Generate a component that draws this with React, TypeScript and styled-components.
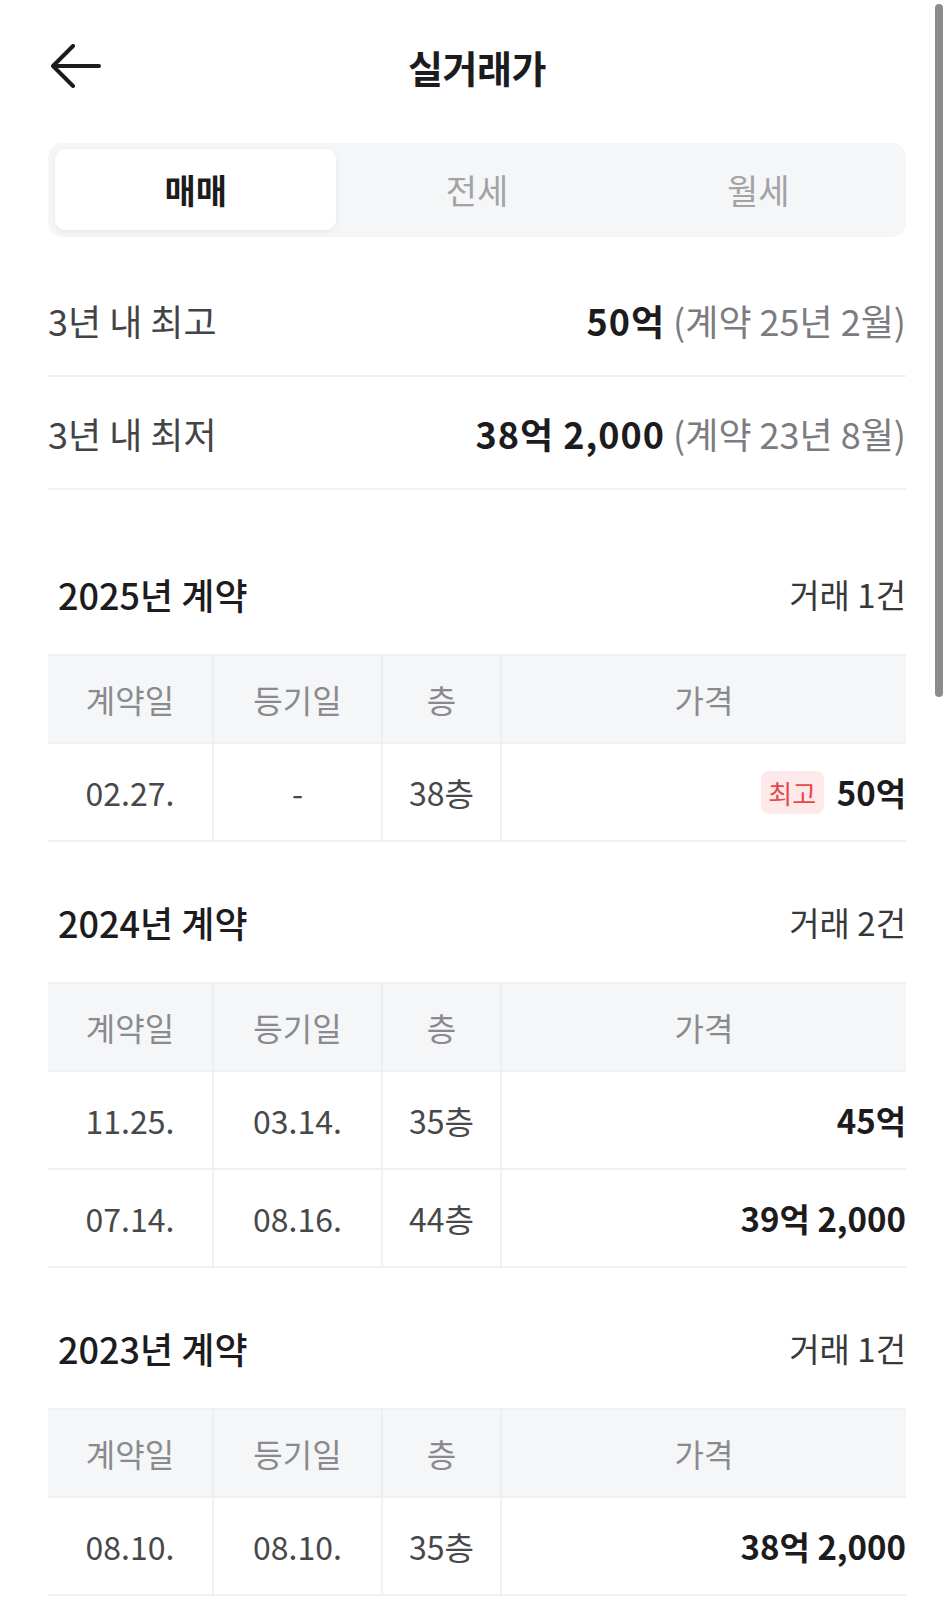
import styled, { createGlobalStyle } from "styled-components"

type Deal = {
  date: string
  registered: string
  floor: string
  price: string
  highest?: boolean
}

type YearGroup = {
  year: number
  deals: Deal[]
}

const groups: YearGroup[] = [
  { year: 2025, deals: [{ date: '02.27.', registered: '-', floor: '38층', price: '50억', highest: true }] },
  {
    year: 2024,
    deals: [
      { date: '11.25.', registered: '03.14.', floor: '35층', price: '45억' },
      { date: '07.14.', registered: '08.16.', floor: '44층', price: '39억 2,000' },
    ],
  },
  { year: 2023, deals: [{ date: '08.10.', registered: '08.10.', floor: '35층', price: '38억 2,000' }] },
]

const tabs = ['매매', '전세', '월세']

export default function App() {
  return (
    <>
      <GlobalStyle />
      <Page>
        <Header>
          <BackButton aria-label="뒤로">
            <svg width="50" height="44" viewBox="0 0 50 44" fill="none">
              <path d="M22 2 L2 22 L22 42 M2 22 H48" stroke="#1c1c1e" strokeWidth="4" strokeLinecap="round" strokeLinejoin="round" />
            </svg>
          </BackButton>
          <Title>실거래가</Title>
          <span />
        </Header>

        <Tabs>
          {tabs.map((tab, index) => (
            <Tab key={tab} $active={index === 0}>{tab}</Tab>
          ))}
        </Tabs>

        <Summary>
          <SummaryRow>
            <SummaryLabel>3년 내 최고</SummaryLabel>
            <SummaryValue>
              <strong>50억</strong> <Muted>(계약 25년 2월)</Muted>
            </SummaryValue>
          </SummaryRow>
          <SummaryRow>
            <SummaryLabel>3년 내 최저</SummaryLabel>
            <SummaryValue>
              <strong>38억 2,000</strong> <Muted>(계약 23년 8월)</Muted>
            </SummaryValue>
          </SummaryRow>
        </Summary>

        {groups.map((group) => (
          <Section key={group.year}>
            <SectionHeader>
              <SectionTitle>{group.year}년 계약</SectionTitle>
              <DealCount>거래 {group.deals.length}건</DealCount>
            </SectionHeader>
            <Table>
              <HeadCell>계약일</HeadCell>
              <HeadCell>등기일</HeadCell>
              <HeadCell>층</HeadCell>
              <HeadCell $last>가격</HeadCell>
              {group.deals.map((deal) => (
                <Row key={deal.date}>
                  <Cell>{deal.date}</Cell>
                  <Cell>{deal.registered}</Cell>
                  <Cell>{deal.floor}</Cell>
                  <PriceCell>
                    {deal.highest && <Badge>최고</Badge>}
                    {deal.price}
                  </PriceCell>
                </Row>
              ))}
            </Table>
          </Section>
        ))}
      </Page>
      <ScrollThumb />
    </>
  )
}

const GlobalStyle = createGlobalStyle`
  * {
    box-sizing: border-box;
  }

  body {
    margin: 0;
    background: #fff;
    overflow: hidden;
    font-family: "Noto Sans CJK KR", "Noto Sans", sans-serif;
    color: #1c1c1e;
  }
`

const Page = styled.div`
  padding: 0 38px 18px 48px;
`

const Header = styled.header`
  display: grid;
  grid-template-columns: 1fr auto 1fr;
  align-items: center;
  height: 132px;
`

const BackButton = styled.button`
  display: flex;
  align-items: center;
  justify-self: start;
  margin-left: 3px;
  padding: 0;
  border: none;
  background: none;
`

const Title = styled.h1`
  margin: 0;
  font-size: 38px;
  font-weight: 700;
  letter-spacing: -0.5px;
`

const Tabs = styled.div`
  display: grid;
  grid-template-columns: repeat(3, 1fr);
  margin-top: 11px;
  padding: 6px 7px 7px;
  height: 94px;
  border-radius: 14px;
  background: #f5f6f8;
`

const Tab = styled.div<{ $active?: boolean }>`
  display: flex;
  align-items: center;
  justify-content: center;
  border-radius: 10px;
  font-size: 34px;
  font-weight: ${({ $active }) => ($active ? 700 : 400)};
  color: ${({ $active }) => ($active ? '#1c1c1e' : '#a3a3a6')};
  background: ${({ $active }) => ($active ? '#fff' : 'transparent')};
  box-shadow: ${({ $active }) => ($active ? '0 2px 6px rgba(0, 0, 0, 0.06)' : 'none')};
`

const Summary = styled.div`
  margin-top: 27px;
`

const SummaryRow = styled.div`
  display: flex;
  align-items: center;
  justify-content: space-between;
  height: 113px;
  border-bottom: 2px solid #f0f1f3;
`

const SummaryLabel = styled.span`
  font-size: 36px;
  color: #444446;
`

const SummaryValue = styled.span`
  font-size: 36px;

  & strong {
    font-weight: 700;
    letter-spacing: 1px;
    color: #1c1c1e;
  }
`

const Muted = styled.span`
  color: #7c7c80;
`

const Section = styled.section`
  margin-top: 20px;

  &:first-of-type {
    margin-top: 44px;
  }
`

const SectionHeader = styled.div`
  display: flex;
  align-items: center;
  justify-content: space-between;
  height: 120px;
  padding-left: 10px;
`

const SectionTitle = styled.h2`
  margin: 0;
  font-size: 36px;
  font-weight: 500;
`

const DealCount = styled.span`
  font-size: 33px;
  color: #38383a;
`

const Table = styled.div`
  display: grid;
  grid-template-columns: 166px 169px 119px 1fr;
  border-top: 2px solid #eef0f3;
`

const HeadCell = styled.div<{ $last?: boolean }>`
  display: flex;
  align-items: center;
  justify-content: center;
  height: 88px;
  background: #f5f6f8;
  border-bottom: 2px solid #eef0f3;
  border-right: ${({ $last }) => ($last ? 'none' : '2px solid #eceef1')};
  font-size: 32px;
  color: #8a8a8e;
`

const Row = styled.div`
  display: contents;
`

const Cell = styled.div`
  display: flex;
  align-items: center;
  justify-content: center;
  height: 98px;
  border-bottom: 2px solid #eef0f3;
  border-right: 2px solid #eef0f3;
  font-size: 32px;
  color: #48484a;
`

const PriceCell = styled.div`
  display: flex;
  align-items: center;
  justify-content: flex-end;
  gap: 13px;
  height: 98px;
  border-bottom: 2px solid #eef0f3;
  font-size: 33px;
  font-weight: 700;
  color: #1c1c1e;
`

const Badge = styled.span`
  display: flex;
  align-items: center;
  justify-content: center;
  width: 63px;
  height: 43px;
  border-radius: 8px;
  background: #fde9ea;
  color: #e5484d;
  font-size: 26px;
  font-weight: 400;
`

const ScrollThumb = styled.div`
  position: fixed;
  top: 4px;
  right: 1px;
  width: 8px;
  height: 693px;
  border-radius: 4px;
  background: #8c8c8c;
`
